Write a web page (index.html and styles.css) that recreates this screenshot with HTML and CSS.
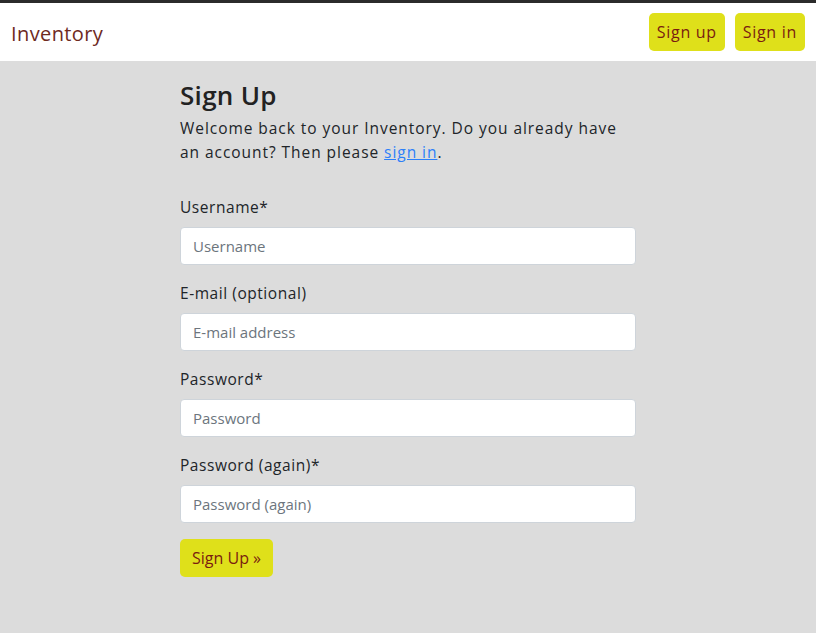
FILE: index.html
```html
<!DOCTYPE html>
<html lang="en">
<head>
<meta charset="utf-8">
<title>Inventory - Sign Up</title>
<link rel="stylesheet" href="styles.css">
</head>
<body>
<nav class="navbar">
  <a class="brand" href="#">Inventory</a>
  <div class="nav-actions">
    <a class="btn btn-nav" href="#">Sign up</a>
    <a class="btn btn-nav" href="#">Sign in</a>
  </div>
</nav>
<main class="content">
  <h3 class="title">Sign Up</h3>
  <p class="intro">Welcome back to your Inventory. Do you already have an account? Then please <a href="#" class="link">sign in</a>.</p>
  <form class="form">
    <div class="form-group">
      <label class="label">Username*</label>
      <input class="input" type="text" placeholder="Username">
    </div>
    <div class="form-group">
      <label class="label">E-mail (optional)</label>
      <input class="input" type="email" placeholder="E-mail address">
    </div>
    <div class="form-group">
      <label class="label">Password*</label>
      <input class="input" type="password" placeholder="Password">
    </div>
    <div class="form-group">
      <label class="label">Password (again)*</label>
      <input class="input" type="password" placeholder="Password (again)">
    </div>
    <button class="btn btn-submit" type="submit">Sign Up &raquo;</button>
  </form>
</main>
</body>
</html>
```
FILE: styles.css
```css
* { box-sizing: border-box; }
html, body { margin: 0; padding: 0; }
body {
  font-family: "Open Sans", "Noto Sans", sans-serif;
  font-size: 16px;
  line-height: 24px;
  color: #212529;
  background: #dcdcdc;
  min-height: 633px;
}
.navbar {
  border-top: 3px solid #2b2b2b;
  background: #ffffff;
  height: 61px;
  display: flex;
  align-items: center;
  justify-content: space-between;
  padding: 0 11px;
}
.brand {
  font-size: 20px;
  letter-spacing: 0.4px;
  color: #6e2a1e;
  text-decoration: none;
  padding-top: 4px;
}
.nav-actions { display: flex; gap: 10px; }
.btn {
  background: #dfe01a;
  color: #7a1c10;
  border: none;
  border-radius: 5px;
  text-decoration: none;
  font-family: inherit;
}
.btn-nav {
  height: 38px;
  line-height: 38px;
  padding: 0 8px;
  font-size: 16px;
  letter-spacing: 0.7px;
}
.content {
  width: 456px;
  margin: 0 auto;
  padding-top: 17px;
}
.title {
  margin: 0 0 4px;
  font-size: 26px;
  font-weight: 600;
  line-height: 34px;
  letter-spacing: 0.3px;
  color: #222;
}
.intro {
  margin: 0 0 31px;
  letter-spacing: 0.95px;
  font-size: 15.5px;
}
.link { color: #2c7ff9; }
.form-group { margin-bottom: 16px; }
.label {
  display: block;
  margin-bottom: 8px;
  letter-spacing: 0.55px;
  font-size: 15.5px;
}
.input {
  display: block;
  width: 100%;
  height: 38px;
  padding: 6px 12px;
  font-family: inherit;
  font-size: 15px;
  color: #495057;
  background: #fff;
  border: 1px solid #ced4da;
  border-radius: 4px;
}
.input::placeholder { color: #6c757d; }
.btn-submit {
  margin-top: 0;
  height: 38px;
  padding: 0 12px;
  font-size: 16px;
  cursor: pointer;
}
```
